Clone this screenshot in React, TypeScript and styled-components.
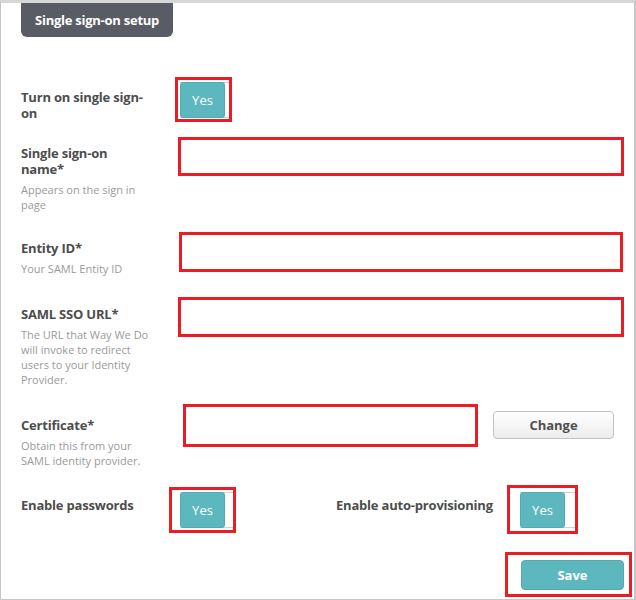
import React from 'react';
import styled, { createGlobalStyle } from 'styled-components';

const GlobalStyle = createGlobalStyle`
  html, body {
    margin: 0;
    padding: 0;
    background: #fff;
  }
  body {
    font-family: 'Open Sans', 'Liberation Sans', sans-serif;
  }
`;

const Frame = styled.div`
  box-sizing: border-box;
  width: 636px;
  height: 600px;
  border: 1px solid #c6c6c6;
  border-top: 3px solid #d6d6d6;
  border-right: 2px solid #c6c6c6;
  padding: 0 0 0 20px;
  display: flex;
  flex-direction: column;
`;

const Tab = styled.div`
  box-sizing: border-box;
  width: 152px;
  height: 34px;
  background: #595c64;
  color: #fff;
  font-size: 13px;
  font-weight: 700;
  letter-spacing: -0.25px;
  line-height: 34px;
  padding-left: 14px;
  border-radius: 0 0 6px 6px;
  white-space: nowrap;
`;

const Row = styled.div<{ $mt: number }>`
  display: grid;
  grid-template-columns: 157px 1fr;
  align-items: start;
  margin-top: ${p => p.$mt}px;
`;

const LabelCell = styled.div<{ $pt: number; $w?: number }>`
  padding-top: ${p => p.$pt}px;
  width: ${p => p.$w ?? 128}px;
`;

const Label = styled.div`
  color: #4d4d4d;
  font-size: 13px;
  font-weight: 700;
  letter-spacing: -0.2px;
  line-height: 16px;
`;

const Hint = styled.div`
  color: #9a9a9a;
  font-size: 11px;
  line-height: 15px;
  margin-top: 5px;
`;

const Field = styled.div<{ $w: number; $h?: number; $ml?: number }>`
  box-sizing: border-box;
  width: ${p => p.$w}px;
  height: ${p => p.$h ?? 39}px;
  margin-left: ${p => p.$ml ?? 0}px;
  border: 3px solid #ec1c24;
  background: #fff;
`;

const FieldLine = styled.div`
  display: flex;
  align-items: flex-start;
`;

const ChangeButton = styled.button`
  box-sizing: border-box;
  width: 121px;
  height: 28px;
  margin: 7px 0 0 15px;
  border: 1px solid #c2c2c2;
  border-radius: 4px;
  background: linear-gradient(#ffffff, #ececec);
  color: #4f4f4f;
  font-family: 'Open Sans', 'Liberation Sans', sans-serif;
  font-size: 13px;
  font-weight: 700;
  padding: 0;
`;

const Highlight = styled.div<{ $w: number; $h: number; $pl: number; $pt: number; $ml?: number; $mt?: number }>`
  box-sizing: border-box;
  display: flex;
  width: ${p => p.$w}px;
  height: ${p => p.$h}px;
  margin-left: ${p => p.$ml ?? 0}px;
  margin-top: ${p => p.$mt ?? 0}px;
  padding: ${p => p.$pt}px 0 0 ${p => p.$pl}px;
  border: 3px solid #ec1c24;
  background: #fff;
`;

const Toggle = styled.div`
  flex: 1;
  display: flex;
  height: 36px;
  box-sizing: border-box;
  border-top: 1px solid #cfcfcf;
  border-bottom: 1px solid #cfcfcf;
`;

const Knob = styled.div`
  box-sizing: border-box;
  width: 45px;
  height: 36px;
  margin-top: -1px;
  background: #5db7be;
  border: 1px solid #55aab1;
  border-radius: 3px;
  color: #fff;
  font-size: 13px;
  line-height: 34px;
  text-align: center;
`;

const PairRow = styled.div`
  display: flex;
  margin-top: 17px;
`;

const Pair = styled.div<{ $w: number; $label: number }>`
  display: grid;
  grid-template-columns: ${p => p.$label}px auto;
  align-items: start;
  width: ${p => p.$w}px;
`;

const SaveRow = styled.div`
  display: flex;
  justify-content: flex-end;
  margin-top: 18px;
  margin-right: 2px;
`;

const SaveButton = styled.button`
  box-sizing: border-box;
  width: 103px;
  height: 30px;
  border: 1px solid #55aab1;
  border-radius: 4px;
  background: #5db7be;
  color: #fff;
  font-family: 'Open Sans', 'Liberation Sans', sans-serif;
  font-size: 13px;
  font-weight: 700;
  padding: 0;
`;

const YesToggle = () => (
  <Toggle>
    <Knob>Yes</Knob>
  </Toggle>
);

export default function App() {
  return (
    <>
      <GlobalStyle />
      <Frame>
        <Tab>Single sign-on setup</Tab>

        <Row $mt={40}>
          <LabelCell $pt={12}>
            <Label>Turn on single sign-on</Label>
          </LabelCell>
          <Highlight $w={57} $h={45} $pl={2} $pt={2} $ml={-3}>
            <YesToggle />
          </Highlight>
        </Row>

        <Row $mt={15}>
          <LabelCell $pt={8}>
            <Label>Single sign-on name*</Label>
            <Hint>Appears on the sign in page</Hint>
          </LabelCell>
          <Field $w={446} />
        </Row>

        <Row $mt={20}>
          <LabelCell $pt={8}>
            <Label>Entity ID*</Label>
            <Hint>Your SAML Entity ID</Hint>
          </LabelCell>
          <Field $w={444} $h={40} $ml={1} />
        </Row>

        <Row $mt={21}>
          <LabelCell $pt={9}>
            <Label>SAML SSO URL*</Label>
            <Hint>The URL that Way We Do will invoke to redirect users to your Identity Provider.</Hint>
          </LabelCell>
          <Field $w={446} $h={40} />
        </Row>

        <Row $mt={17}>
          <LabelCell $pt={13}>
            <Label>Certificate*</Label>
            <Hint>Obtain this from your SAML identity provider.</Hint>
          </LabelCell>
          <FieldLine>
            <Field $w={295} $h={43} $ml={5} />
            <ChangeButton>Change</ChangeButton>
          </FieldLine>
        </Row>

        <PairRow>
          <Pair $w={315} $label={148}>
            <LabelCell $pt={12}>
              <Label>Enable passwords</Label>
            </LabelCell>
            <Highlight $w={67} $h={46} $pl={8} $pt={2} $mt={2}>
              <YesToggle />
            </Highlight>
          </Pair>
          <Pair $w={250} $label={171}>
            <LabelCell $pt={12} $w={171}>
              <Label>Enable auto-provisioning</Label>
            </LabelCell>
            <Highlight $w={71} $h={49} $pl={10} $pt={4}>
              <YesToggle />
            </Highlight>
          </Pair>
        </PairRow>

        <SaveRow>
          <Highlight $w={127} $h={45} $pl={13} $pt={5}>
            <SaveButton>Save</SaveButton>
          </Highlight>
        </SaveRow>
      </Frame>
    </>
  );
}
